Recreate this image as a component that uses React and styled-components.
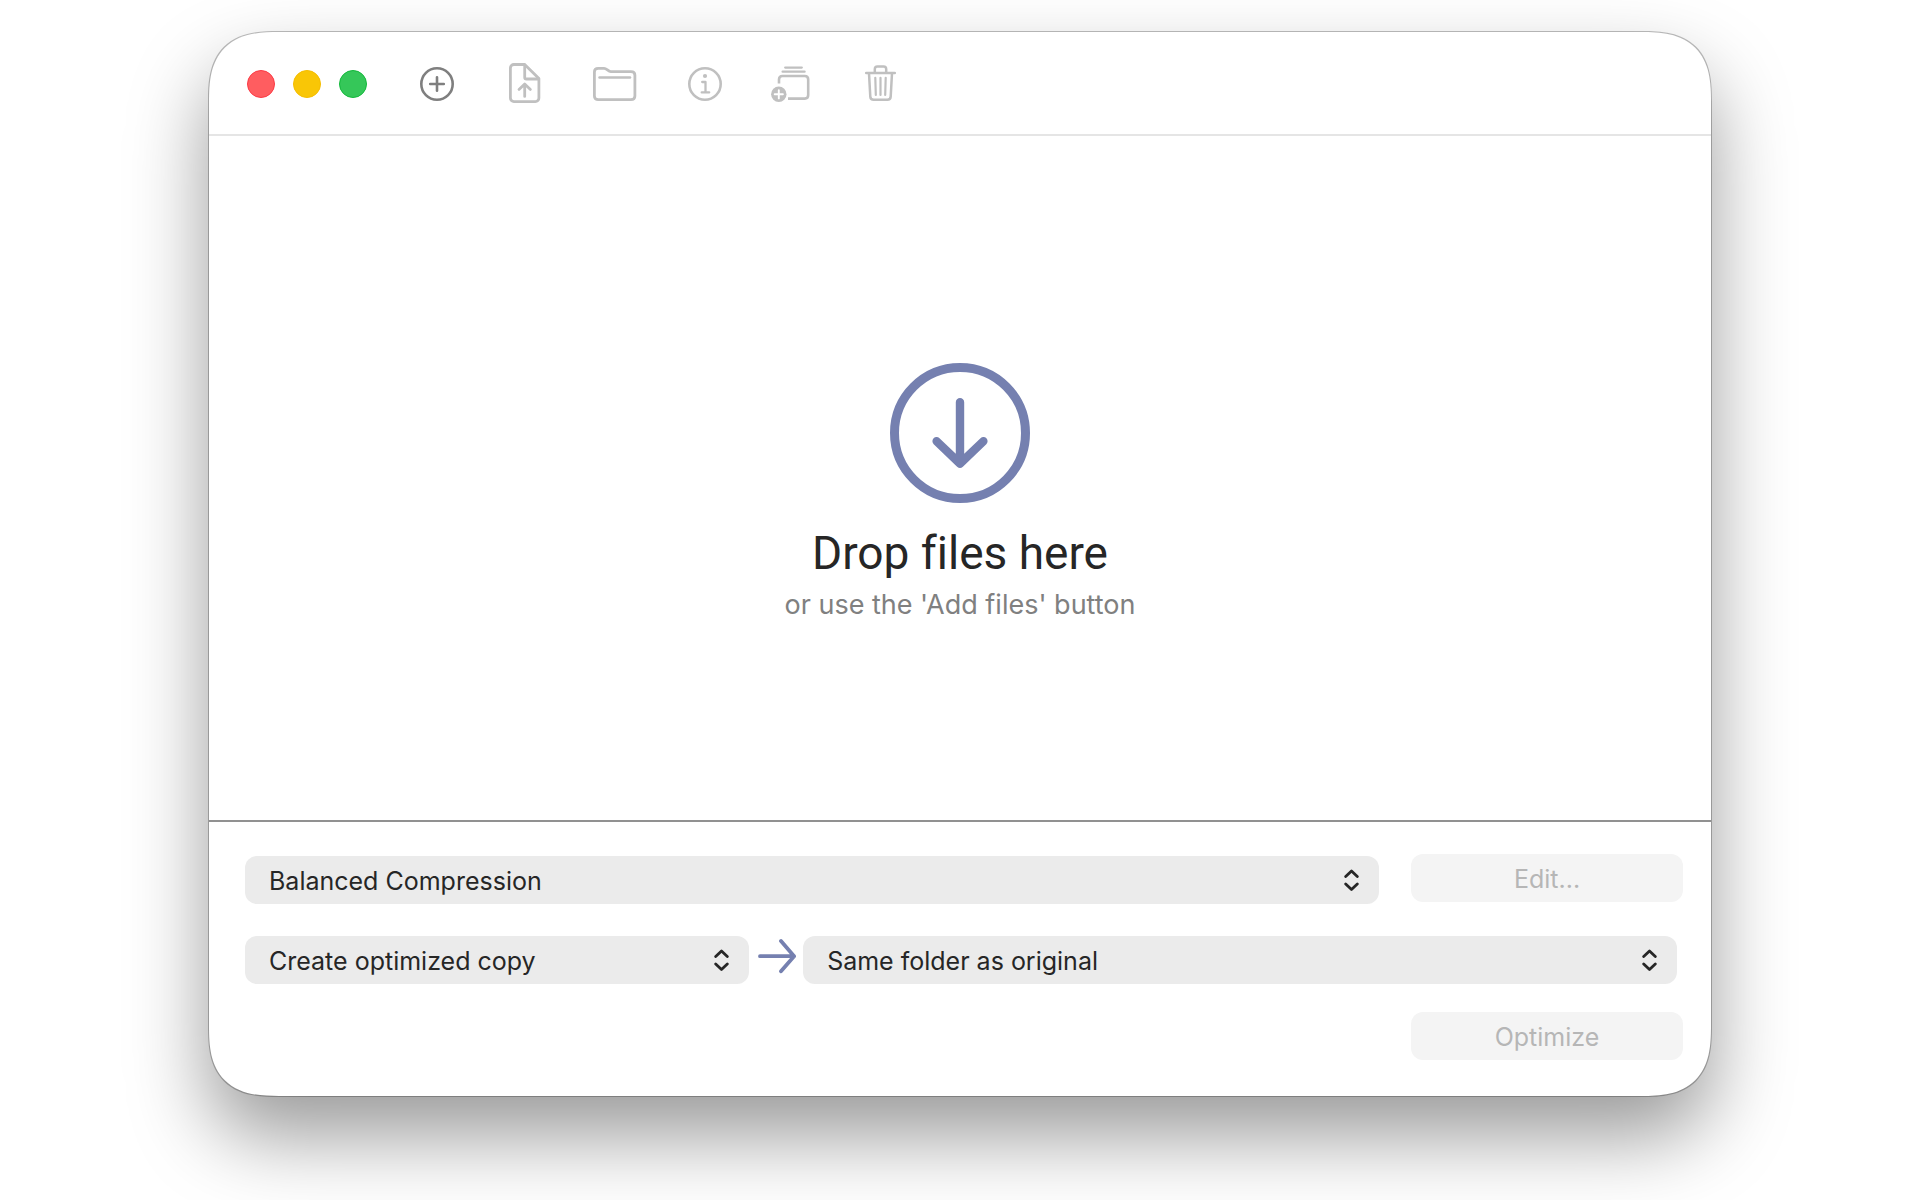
import React, { useState } from 'react'
import styled, { createGlobalStyle } from 'styled-components'

const GlobalStyle = createGlobalStyle`
  * {
    box-sizing: border-box;
  }

  body {
    margin: 0;
    background: #ffffff;
    color: #262626;
    font-family: Inter, "Liberation Sans", sans-serif;
    font-size: 25px;
    line-height: 32px;
  }
`

const Desktop = styled.div`
  display: flex;
  min-height: 100vh;
  padding: 32px 209px 104px;
`

const Window = styled.main`
  display: flex;
  flex: 1;
  flex-direction: column;
  overflow: hidden;
  border-radius: 54px;
  background: #ffffff;
  box-shadow: 0 0 0 1px rgba(0, 0, 0, 0.25), 0 40px 80px rgba(0, 0, 0, 0.4);

  /* smoother corners where the browser has them */
  @supports (corner-shape: squircle) {
    border-radius: 70px;
    corner-shape: superellipse(1.44);
  }
`

const Toolbar = styled.header`
  display: flex;
  align-items: center;
  gap: 51px;
  padding: 30px 38px 28px;
  border-bottom: 2px solid #e5e5e5;
`

const WindowButtons = styled.div`
  display: flex;
  gap: 18px;
`

const WindowButton = styled.button`
  width: 28px;
  height: 28px;
  padding: 0;
  border: 1px solid ${props => props.$edge};
  border-radius: 50%;
  background: ${props => props.$color};
`

const Tools = styled.div`
  display: flex;
  gap: 48px;
`

const ToolButton = styled.button`
  display: flex;
  padding: 0;
  border: none;
  background: none;
  color: #7f7f7f;

  &:disabled {
    color: #c0c0c0;
  }
`

const Icon = styled.svg`
  display: block;
  fill: none;
  stroke: currentColor;
  stroke-linecap: round;
  stroke-linejoin: round;
`

const DropArea = styled.section`
  display: flex;
  flex: 1;
  flex-direction: column;
  align-items: center;
  justify-content: center;
  padding-top: 28px;
  color: #7580b0;
`

const Title = styled.h1`
  margin: 20px 0 0;
  color: #262626;
  font-family: Roboto, Inter, sans-serif;
  font-size: 46px;
  font-variant-ligatures: none;
  font-weight: 400;
  line-height: 60px;
`

const Hint = styled.p`
  margin: 6px 0 0;
  color: #808080;
  font-size: 27px;
`

const Controls = styled.section`
  padding: 32px 28px 36px 36px;
  border-top: 2px solid #919191;
`

const PresetRow = styled.div`
  display: grid;
  grid-template-columns: 1fr 272px;
  gap: 32px;
  height: 50px;
`

const OutputRow = styled.div`
  display: grid;
  grid-template-columns: 15fr 54px 26fr;
  margin: 32px 6px 28px 0;
  color: #7580b0;
`

const ActionRow = styled.div`
  display: flex;
  justify-content: flex-end;
`

const PushButton = styled.button`
  width: 272px;
  height: 48px;
  padding: 2px 0 0;
  border: none;
  border-radius: 12px;
  background: #f4f4f4;
  color: #b6b6b6;
  font: inherit;
`

const Popup = styled.div`
  display: grid;
  grid-template-columns: 1fr 15px 20px;
  align-items: center;
  align-self: end;
  color: #262626;

  select {
    grid-area: 1 / 1 / 2 / 4;
    width: 100%;
    height: 48px;
    padding: 2px 48px 0 24px;
    appearance: none;
    border: none;
    border-radius: 12px;
    background: #ebebeb;
    color: inherit;
    font: inherit;
  }

  svg {
    grid-area: 1 / 2 / 2 / 3;
    pointer-events: none;
  }
`

const Arrow = styled(Icon)`
  justify-self: center;
`

function PopupSelect({ label, options }) {
  const [value, setValue] = useState(options[0])

  return (
    <Popup>
      <select aria-label={label} value={value} onChange={e => setValue(e.target.value)}>
        {options.map(option => <option key={option}>{option}</option>)}
      </select>
      <Icon width="15" height="22" viewBox="0 0 15 22" strokeWidth="2.8">
        <path d="M1.7 7.5 7.5 2 13.3 7.5M1.7 15 7.5 20.5 13.3 15" />
      </Icon>
    </Popup>
  )
}

function App() {
  return (
    <Desktop>
      <GlobalStyle />
      <Window>
        <Toolbar>
          <WindowButtons>
            <WindowButton aria-label="Close" $color="#ff5d60" $edge="#fb3a44" />
            <WindowButton aria-label="Minimize" $color="#f9c606" $edge="#f5bd00" />
            <WindowButton aria-label="Zoom" $color="#35c759" $edge="#12b83a" />
          </WindowButtons>
          <Tools>
            <ToolButton aria-label="Add files">
              <Icon width="38" height="44" viewBox="0 0 38 44" strokeWidth="2.6">
                <circle cx="19" cy="22" r="15.7" />
                <path d="M19 15.2v13.6M12.2 22h13.6" />
              </Icon>
            </ToolButton>
            <ToolButton aria-label="Export file" disabled>
              <Icon width="40" height="44" viewBox="0 0 40 44" strokeWidth="2.8">
                <path d="M9.9 2.5H20.7L34.9 16.5V36.1a3.5 3.5 0 0 1-3.5 3.5H9.9A3.5 3.5 0 0 1 6.4 36.1V6a3.5 3.5 0 0 1 3.5-3.5Z" />
                <path d="M20.7 3V15.2q0 1.8 1.8 1.8H34.5" />
                <path d="M20.7 34.4V22.4M15 27.4 20.7 22 26.4 27.4" />
              </Icon>
            </ToolButton>
            <ToolButton aria-label="Show in folder" disabled>
              <Icon width="46" height="44" viewBox="0 0 46 44" strokeWidth="2.8">
                <path d="M2.4 34V9.9Q2.4 6.3 6.2 6.3H12c2.8 0 4 3.3 6.8 3.3H39Q42.9 9.6 42.9 13.2V34Q42.9 37.6 39 37.6H6.2Q2.4 37.6 2.4 34Z" />
                <path d="M7.5 15.4H38" strokeWidth="2.5" />
              </Icon>
            </ToolButton>
            <ToolButton aria-label="Info" disabled>
              <Icon width="37" height="44" viewBox="0 0 37 44" strokeWidth="2.6">
                <circle cx="19" cy="22" r="15.7" />
                <circle cx="19" cy="14" r="2.1" fill="currentColor" stroke="none" />
                <path d="M16.2 20H19.5V30.4M15.7 30.4H23.2" strokeWidth="2.3" />
              </Icon>
            </ToolButton>
            <ToolButton aria-label="Add to presets" disabled>
              <Icon width="40" height="44" viewBox="0 0 40 44" strokeWidth="2.3">
                <path d="M14.2 5.6H30.8M11.6 9.7H33.6" />
                <path d="M8 21.5V17.4Q8 14 11.4 14H33.8Q37.2 14 37.2 17.4V33Q37.2 36.6 33.8 36.6H17" strokeWidth="2.6" strokeLinecap="butt" />
                <circle cx="7.8" cy="32.3" r="7.7" fill="currentColor" stroke="none" />
                <path d="M7.8 28.2V36.4M3.7 32.3H11.9" stroke="#ffffff" strokeWidth="1.9" />
              </Icon>
            </ToolButton>
            <ToolButton aria-label="Remove" disabled>
              <Icon width="43" height="44" viewBox="0 0 43 44" strokeWidth="2.5">
                <path d="M7.2 11H35.8" />
                <path d="M15.8 10.5V7.2Q15.8 4.6 18.4 4.6H24.6Q27.2 4.6 27.2 7.2V10.5" />
                <path d="M10 11.4 11.3 34.6Q11.5 37.8 14.7 37.8H28.3Q31.5 37.8 31.7 34.6L33 11.4" />
                <path d="M16.3 15.8 16.8 33M21.5 15.8V33M26.7 15.8 26.2 33" strokeWidth="2.2" />
              </Icon>
            </ToolButton>
          </Tools>
        </Toolbar>

        <DropArea>
          <Icon width="140" height="140" viewBox="0 0 140 140" strokeWidth="8.4">
            <circle cx="70" cy="70" r="65.5" strokeWidth="9" />
            <path d="M70 39.2V100M46.6 78.2 70 100.6 93.4 78.2" />
          </Icon>
          <Title>Drop files here</Title>
          <Hint>or use the 'Add files' button</Hint>
        </DropArea>

        <Controls>
          <PresetRow>
            <PopupSelect label="Preset" options={['Balanced Compression']} />
            <PushButton disabled>Edit...</PushButton>
          </PresetRow>
          <OutputRow>
            <PopupSelect label="Output" options={['Create optimized copy']} />
            <Arrow width="40" height="40" viewBox="0 0 40 40" strokeWidth="3.8">
              <path d="M4 20.2H38.1M25 5 38.1 20.2 25 35.2" />
            </Arrow>
            <PopupSelect label="Destination" options={['Same folder as original']} />
          </OutputRow>
          <ActionRow>
            <PushButton disabled>Optimize</PushButton>
          </ActionRow>
        </Controls>
      </Window>
    </Desktop>
  )
}

export default App
